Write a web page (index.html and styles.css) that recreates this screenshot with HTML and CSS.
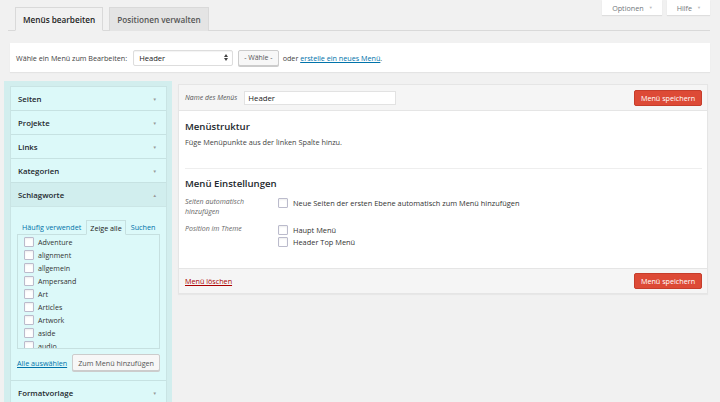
FILE: index.html
```html
<!DOCTYPE html>
<html lang="de">
<head>
<meta charset="utf-8">
<title>Menüs</title>
<link rel="stylesheet" href="styles.css">
</head>
<body>
<div class="top">
  <div class="tabs">
    <span class="tab active">Menüs bearbeiten</span>
    <span class="tab">Positionen verwalten</span>
  </div>
  <div class="meta">
    <span class="meta-btn">Optionen <i class="caret">▼</i></span>
    <span class="meta-btn">Hilfe <i class="caret">▼</i></span>
  </div>
</div>

<div class="manage">
  <span>Wähle ein Menü zum Bearbeiten:</span>
  <span class="select">Header <svg class="updown" width="4" height="7" viewBox="0 0 4 7"><path d="M0 3 L2 0 L4 3Z M0 4 L2 7 L4 4Z" fill="#444"/></svg></span>
  <span class="btn">- Wähle -</span>
  <span>oder <a class="link">erstelle ein neues Menü</a>.</span>
</div>

<div class="columns">
  <div class="side">
    <div class="acc">
      <div class="sec"><span>Seiten</span><i class="arr">▼</i></div>
      <div class="sec"><span>Projekte</span><i class="arr">▼</i></div>
      <div class="sec"><span>Links</span><i class="arr">▼</i></div>
      <div class="sec"><span>Kategorien</span><i class="arr">▼</i></div>
      <div class="sec open"><span>Schlagworte</span><i class="arr">▲</i></div>
      <div class="content">
        <div class="subtabs">
          <span class="st">Häufig verwendet</span>
          <span class="st active">Zeige alle</span>
          <span class="st">Suchen</span>
        </div>
        <div class="list">
          <div class="item"><span class="cb"></span>Adventure</div>
          <div class="item"><span class="cb"></span>alignment</div>
          <div class="item"><span class="cb"></span>allgemein</div>
          <div class="item"><span class="cb"></span>Ampersand</div>
          <div class="item"><span class="cb"></span>Art</div>
          <div class="item"><span class="cb"></span>Articles</div>
          <div class="item"><span class="cb"></span>Artwork</div>
          <div class="item"><span class="cb"></span>aside</div>
          <div class="item"><span class="cb"></span>audio</div>
        </div>
        <div class="actions">
          <a class="link">Alle auswählen</a>
          <span class="btn add">Zum Menü hinzufügen</span>
        </div>
      </div>
      <div class="sec last"><span>Formatvorlage</span><i class="arr">▼</i></div>
    </div>
  </div>

  <div class="main">
    <div class="mhead">
      <label class="mlabel">Name des Menüs</label>
      <span class="input">Header</span>
      <span class="save">Menü speichern</span>
    </div>
    <div class="mbody">
      <h3 class="h">Menüstruktur</h3>
      <p class="desc">Füge Menüpunkte aus der linken Spalte hinzu.</p>
      <div class="divider"></div>
      <h3 class="h">Menü Einstellungen</h3>
      <div class="row">
        <div class="rlabel">Seiten automatisch hinzufügen</div>
        <div class="ropts">
          <div class="opt"><span class="cb"></span>Neue Seiten der ersten Ebene automatisch zum Menü hinzufügen</div>
        </div>
      </div>
      <div class="row">
        <div class="rlabel">Position im Theme</div>
        <div class="ropts">
          <div class="opt"><span class="cb"></span>Haupt Menü</div>
          <div class="opt"><span class="cb"></span>Header Top Menü</div>
        </div>
      </div>
    </div>
    <div class="mfoot">
      <a class="del">Menü löschen</a>
      <span class="save">Menü speichern</span>
    </div>
  </div>
</div>
</body>
</html>
```

FILE: styles.css
```css
* { box-sizing: border-box; }
html, body { margin: 0; padding: 0; }
body {
  background: #f1f1f1;
  font-family: "Open Sans", "Noto Sans", sans-serif;
  font-size: 7.2px;
  color: #444;
  width: 720px;
  height: 402px;
  overflow: hidden;
}
.top {
  display: flex;
  justify-content: space-between;
  align-items: flex-start;
  margin: 0 10px 0 8px;
  height: 31px;
  border-bottom: 1px solid #d9d9d9;
}
.tabs {
  display: flex;
  gap: 6px;
  padding-left: 7px;
  padding-top: 7px;
}
.tab {
  height: 24px;
  padding: 0 7px;
  display: flex;
  align-items: center;
  font-size: 8.2px;
  font-weight: 600;
  color: #555;
  background: #e4e4e4;
  border: 1px solid #d9d9d9;
  border-bottom: none;
}
.tab.active {
  background: #f1f1f1;
  color: #222;
  border-bottom: 1px solid #f1f1f1;
  height: 24px;
}
.meta { display: flex; gap: 5px; }
.meta-btn {
  height: 15px;
  display: flex;
  align-items: center;
  padding: 0 9px 0 10px;
  background: #fff;
  color: #72777c;
  font-size: 7.2px;
  box-shadow: 0 1px 1px rgba(0,0,0,0.08);
}
.caret { font-style: normal; font-size: 4px; color: #bbb; margin-left: 5px; }

.manage {
  margin: 12px 10px 0 10px;
  height: 29px;
  background: #fff;
  box-shadow: 0 1px 1px rgba(0,0,0,0.05);
  display: flex;
  align-items: center;
  padding: 0 6px;
  font-size: 7.2px;
  color: #444;
  white-space: nowrap;
}
.select {
  margin-left: 6px;
  width: 100px;
  height: 16px;
  border: 1px solid #ddd;
  border-radius: 2px;
  display: flex;
  align-items: center;
  justify-content: space-between;
  padding: 0 4px 0 5px;
  font-size: 7.6px;
  color: #222;
  box-shadow: inset 0 1px 1px rgba(0,0,0,0.05);
}
.btn {
  height: 16px;
  display: inline-flex;
  align-items: center;
  padding: 0 5px;
  background: #f7f7f7;
  border: 1px solid #ccc;
  border-radius: 2px;
  color: #555;
  box-shadow: 0 1px 0 #ccc;
  white-space: nowrap;
}
.manage .btn { margin: 0 4px 0 5px; font-size: 7px; }
.link { color: #0073aa; text-decoration: underline; }

.columns {
  display: flex;
  margin: 9px 12px 0 4px;
  gap: 6px;
  align-items: flex-start;
}
.side {
  width: 168px;
  height: 330px;
  background: #d2eeee;
  padding: 5px 5px 0 6px;
}
.acc {
  background: #dcf9f9;
  border: 1px solid #c9e4e4;
  border-bottom: none;
}
.sec {
  height: 24px;
  border-bottom: 1px solid #c6e2e2;
  display: flex;
  align-items: center;
  justify-content: space-between;
  padding: 0 9px 0 7px;
  font-size: 7.8px;
  font-weight: 600;
  color: #23282d;
}
.sec.open { background: #d1eeee; border-bottom-color: #cbe6e6; }
.sec.last { border-top: 1px solid #c6e2e2; border-bottom: none; margin-top: 1px; }
.arr { font-style: normal; font-size: 4.5px; color: #999; font-weight: 400; }
.content { padding: 13px 6px 7px 6px; height: 172px; }
.subtabs {
  display: flex;
  align-items: flex-end;
  padding-left: 5px;
  font-size: 7.2px;
  white-space: nowrap;
}
.st {
  flex: none;
  color: #0073aa;
  padding: 0 0 2px 0;
  margin-right: 5px;
  height: 13px;
  display: flex;
  align-items: center;
}
.st.active {
  color: #222;
  border: 1px solid #c6e0e0;
  border-bottom: 1px solid #dcf9f9;
  padding: 0 3px;
  margin-bottom: -1px;
  position: relative;
  z-index: 1;
  height: 15px;
}
.list {
  height: 115px;
  border: 1px solid #c6e0e0;
  overflow: hidden;
  padding: 0 0 0 6px;
}
.item {
  height: 13px;
  display: flex;
  align-items: center;
  font-size: 7.1px;
  color: #333;
}
.cb {
  width: 10px;
  height: 10px;
  border: 1px solid #bbc;
  background: #fff;
  border-radius: 1px;
  margin-right: 4px;
  flex: none;
  box-shadow: inset 0 1px 2px rgba(0,0,0,0.07);
}
.actions {
  display: flex;
  justify-content: space-between;
  align-items: center;
  margin-top: 5px;
  font-size: 7.2px;
  white-space: nowrap;
}
.btn.add { height: 17px; padding: 0 5px; font-size: 7.2px; color: #555; }

.main {
  flex: 1;
  margin-top: 3px;
  background: #fff;
  border: 1px solid #e5e5e5;
  box-shadow: 0 1px 1px rgba(0,0,0,0.04);
}
.mhead {
  height: 26px;
  background: #f5f5f5;
  border-bottom: 1px solid #e5e5e5;
  display: flex;
  align-items: center;
  padding: 0 5px 0 6px;
}
.mlabel { font-style: italic; font-size: 6.9px; color: #555; }
.input {
  margin-left: 7px;
  width: 152px;
  height: 14px;
  background: #fff;
  border: 1px solid #e2e2e2;
  display: flex;
  align-items: center;
  padding: 0 3px;
  font-size: 7.8px;
  color: #222;
}
.save {
  margin-left: auto;
  height: 16px;
  width: 68px;
  background: #dd4a36;
  border: 1px solid #c63d2b;
  border-radius: 2px;
  color: #fff;
  font-size: 7.2px;
  display: flex;
  align-items: center;
  justify-content: center;
}
.mbody { padding: 9px 5px 20px 6px; }
.h { margin: 0; font-size: 9.6px; font-weight: 600; color: #23282d; line-height: 14px; }
.desc { margin: 3px 0 0; font-size: 7.3px; color: #444; line-height: 10px; }
.divider { margin-top: 21px; border-top: 1px solid #eee; height: 9px; }
.row { display: flex; margin-top: 6px; }
.row + .row { margin-top: 7px; }
.rlabel {
  width: 93px;
  font-style: italic;
  font-size: 7px;
  color: #666;
  line-height: 10px;
  padding-right: 12px;
}
.opt {
  display: flex;
  align-items: center;
  height: 13px;
  font-size: 7.4px;
  color: #333;
  margin-top: -1px;
}
.opt .cb { margin-right: 5px; }
.mfoot {
  height: 25px;
  background: #f5f5f5;
  border-top: 1px solid #e5e5e5;
  display: flex;
  align-items: center;
  padding: 0 5px 0 6px;
}
.del { color: #a00; text-decoration: underline; font-size: 7.2px; }
```
